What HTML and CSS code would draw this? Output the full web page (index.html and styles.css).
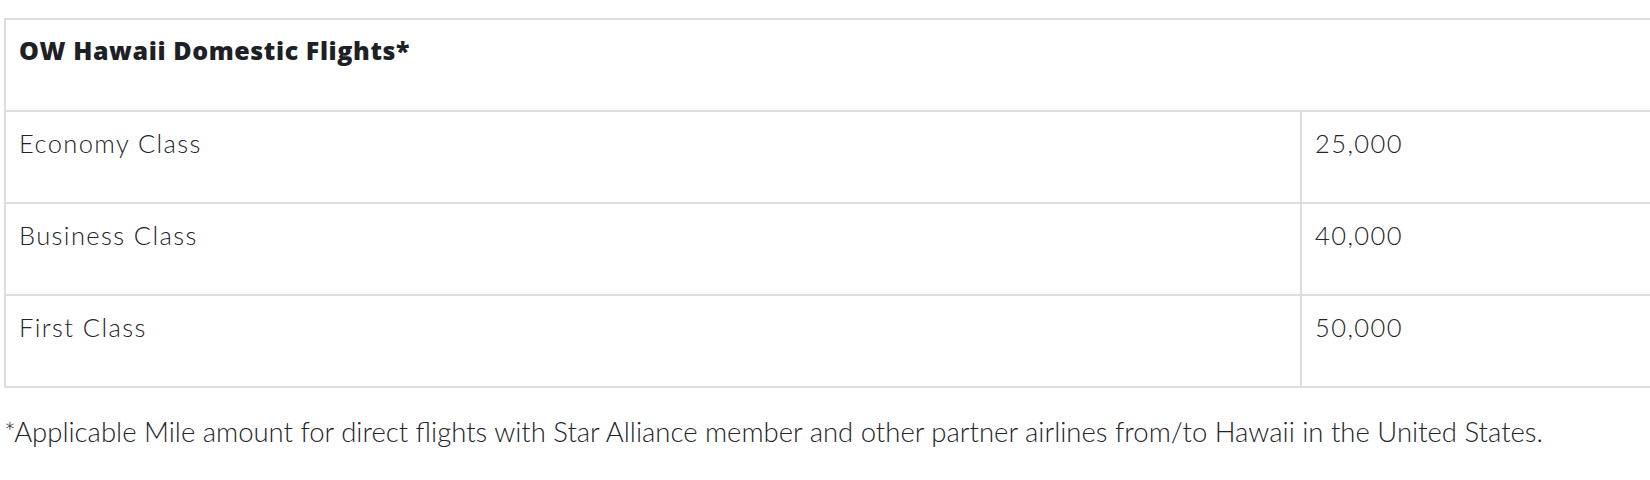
FILE: index.html
```html
<!DOCTYPE html>
<html lang="en">
<head>
<meta charset="utf-8">
<title>OW Hawaii Domestic Flights</title>
<link rel="stylesheet" href="styles.css">
</head>
<body>
<div class="page">
  <table class="miles">
    <colgroup>
      <col class="miles__col-class">
      <col class="miles__col-value">
    </colgroup>
    <thead>
      <tr>
        <th colspan="2" class="miles__title">OW Hawaii Domestic Flights*</th>
      </tr>
    </thead>
    <tbody>
      <tr>
        <td class="miles__cell">Economy Class</td>
        <td class="miles__cell">25,000</td>
      </tr>
      <tr>
        <td class="miles__cell">Business Class</td>
        <td class="miles__cell">40,000</td>
      </tr>
      <tr>
        <td class="miles__cell">First Class</td>
        <td class="miles__cell">50,000</td>
      </tr>
    </tbody>
  </table>
  <p class="note">*Applicable Mile amount for direct flights with Star Alliance member and other partner airlines from/to Hawaii in the United States.</p>
</div>
</body>
</html>
```

FILE: styles.css
```css
html, body {
  margin: 0;
  padding: 0;
  background: #ffffff;
  overflow: hidden;
}

.page {
  padding: 18px 0 0 4px;
  width: 1800px;
  font-family: Lato, "Open Sans", sans-serif;
  color: #222529;
}

.miles {
  border-collapse: collapse;
  width: 1700px;
  table-layout: fixed;
  border: 2px solid #dddddd;
}

.miles__col-class {
  width: 1296px;
}

.miles__col-value {
  width: 404px;
}

.miles th,
.miles td {
  border: 2px solid #dddddd;
  text-align: left;
  vertical-align: top;
}

.miles__title {
  padding: 12px 13px 42px;
  font-family: "Open Sans", Lato, sans-serif;
  font-weight: 800;
  font-size: 25px;
  line-height: 36px;
  letter-spacing: 0.6px;
  color: #1d2125;
}

.miles__cell {
  padding: 13px 13px 41px;
  font-weight: 300;
  font-size: 25.5px;
  line-height: 36px;
  letter-spacing: 1.4px;
}

.note {
  margin: 26px 0 0;
  font-weight: 300;
  font-size: 27.5px;
  line-height: 36px;
  color: #222529;
}
```
